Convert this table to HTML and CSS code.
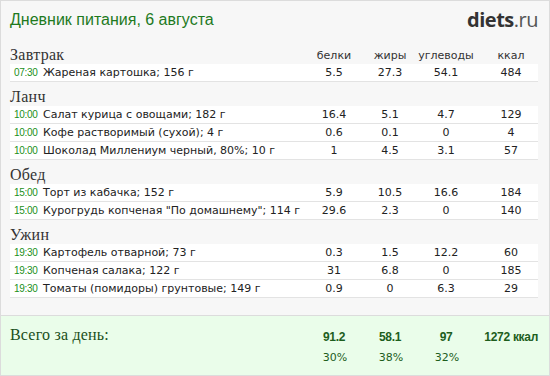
FILE: index.html
```html
<!DOCTYPE html>
<html lang="ru">
<head>
<meta charset="utf-8">
<title>Дневник питания</title>
<link rel="stylesheet" href="styles.css">
</head>
<body>
<div class="diary">
  <div class="top">
    <div class="title">Дневник питания, 6 августа</div>
    <div class="logo"><b>diets</b>.ru</div>
  </div>

  <div class="meal first">
    <div class="grid meal-head"><div class="meal-name">Завтрак</div><div>белки</div><div>жиры</div><div>углеводы</div><div class="kc">ккал</div></div>
    <div class="grid row"><div class="name"><span class="time">07:30</span>Жареная картошка; 156 г</div><div>5.5</div><div>27.3</div><div>54.1</div><div class="kc">484</div></div>
  </div>

  <div class="meal">
    <div class="grid meal-head"><div class="meal-name">Ланч</div></div>
    <div class="grid row"><div class="name"><span class="time">10:00</span>Салат курица с овощами; 182 г</div><div>16.4</div><div>5.1</div><div>4.7</div><div class="kc">129</div></div>
    <div class="grid row"><div class="name"><span class="time">10:00</span>Кофе растворимый (сухой); 4 г</div><div>0.6</div><div>0.1</div><div>0</div><div class="kc">4</div></div>
    <div class="grid row"><div class="name"><span class="time">10:00</span>Шоколад Миллениум черный, 80%; 10 г</div><div>1</div><div>4.5</div><div>3.1</div><div class="kc">57</div></div>
  </div>

  <div class="meal">
    <div class="grid meal-head"><div class="meal-name">Обед</div></div>
    <div class="grid row"><div class="name"><span class="time">15:00</span>Торт из кабачка; 152 г</div><div>5.9</div><div>10.5</div><div>16.6</div><div class="kc">184</div></div>
    <div class="grid row"><div class="name"><span class="time">15:00</span>Курогрудь копченая "По домашнему"; 114 г</div><div>29.6</div><div>2.3</div><div>0</div><div class="kc">140</div></div>
  </div>

  <div class="meal">
    <div class="grid meal-head"><div class="meal-name">Ужин</div></div>
    <div class="grid row"><div class="name"><span class="time">19:30</span>Картофель отварной; 73 г</div><div>0.3</div><div>1.5</div><div>12.2</div><div class="kc">60</div></div>
    <div class="grid row"><div class="name"><span class="time">19:30</span>Копченая салака; 122 г</div><div>31</div><div>6.8</div><div>0</div><div class="kc">185</div></div>
    <div class="grid row"><div class="name"><span class="time">19:30</span>Томаты (помидоры) грунтовые; 149 г</div><div>0.9</div><div>0</div><div>6.3</div><div class="kc">29</div></div>
  </div>

  <div class="total">
    <div class="grid total-main"><div class="total-label">Всего за день:</div><div>91.2</div><div>58.1</div><div>97</div><div class="kc">1272 ккал</div></div>
    <div class="grid total-pct"><div></div><div>30%</div><div>38%</div><div>32%</div><div></div></div>
  </div>
</div>
</body>
</html>
```

FILE: styles.css
```css
html, body {
  margin: 0;
  padding: 0;
  background: #ffffff;
}

.diary {
  box-sizing: border-box;
  width: 550px;
  height: 376px;
  border: 1px solid #dcdcdc;
  background: #f7f7f7;
  display: flex;
  flex-direction: column;
  font-family: "DejaVu Sans", Verdana, sans-serif;
  font-size: 11px;
  color: #222;
}

.top {
  display: flex;
  justify-content: space-between;
  align-items: center;
  height: 45px;
  padding: 0 11px 8px 9px;
  box-sizing: border-box;
}

.title {
  font-family: "Liberation Sans", Arial, sans-serif;
  font-size: 16px;
  color: #1e7a1e;
  line-height: 22px;
}

.logo {
  font-family: "Open Sans", "Liberation Sans", sans-serif;
  font-size: 20px;
  color: #555;
  letter-spacing: -0.5px;
  line-height: 22px;
}

.logo b {
  color: #333;
  font-weight: 700;
}

.meal {
  padding: 6px 11px 0 9px;
}

.meal.first {
  padding-top: 0;
}

.grid {
  display: grid;
  grid-template-columns: 1fr 56px 56px 56px 64px;
  align-items: center;
}

.grid > div {
  text-align: center;
}

.grid > .kc {
  padding-left: 10px;
}

.meal-head {
  height: 18px;
  color: #333;
}

.meal-head > .meal-name {
  text-align: left;
  font-family: "Liberation Serif", "Times New Roman", serif;
  font-size: 16px;
  letter-spacing: 0.3px;
  color: #333;
}

.row {
  height: 17px;
  background: #ffffff;
  border-bottom: 1px solid #e3e3e3;
}

.row > .name {
  text-align: left;
  padding-left: 4px;
  white-space: nowrap;
  display: flex;
  align-items: center;
}

.time {
  font-family: "Liberation Sans", Arial, sans-serif;
  font-size: 10px;
  letter-spacing: -0.3px;
  color: #1a8f1a;
  width: 29px;
  flex: none;
}

.total {
  margin-top: auto;
  height: 60px;
  box-sizing: border-box;
  border-top: 1px solid #dcdcdc;
  background: #eafdea;
  padding: 11px 11px 0 9px;
  color: #1d5e1d;
}

.total-main {
  height: 20px;
}

.total-main > div {
  font-family: "Liberation Sans", Arial, sans-serif;
  font-weight: 700;
  font-size: 12px;
  letter-spacing: -0.3px;
}

.total-main > .total-label {
  text-align: left;
  font-family: "Liberation Serif", "Times New Roman", serif;
  font-weight: 400;
  font-size: 16px;
  letter-spacing: 0.2px;
  align-self: start;
  line-height: 16px;
  color: #1a4f1a;
}

.total-main > .kc {
  text-align: right;
}

.total-pct {
  height: 20px;
  color: #1d5e1d;
}

.total-pct > div {
  padding-left: 2px;
}
```
